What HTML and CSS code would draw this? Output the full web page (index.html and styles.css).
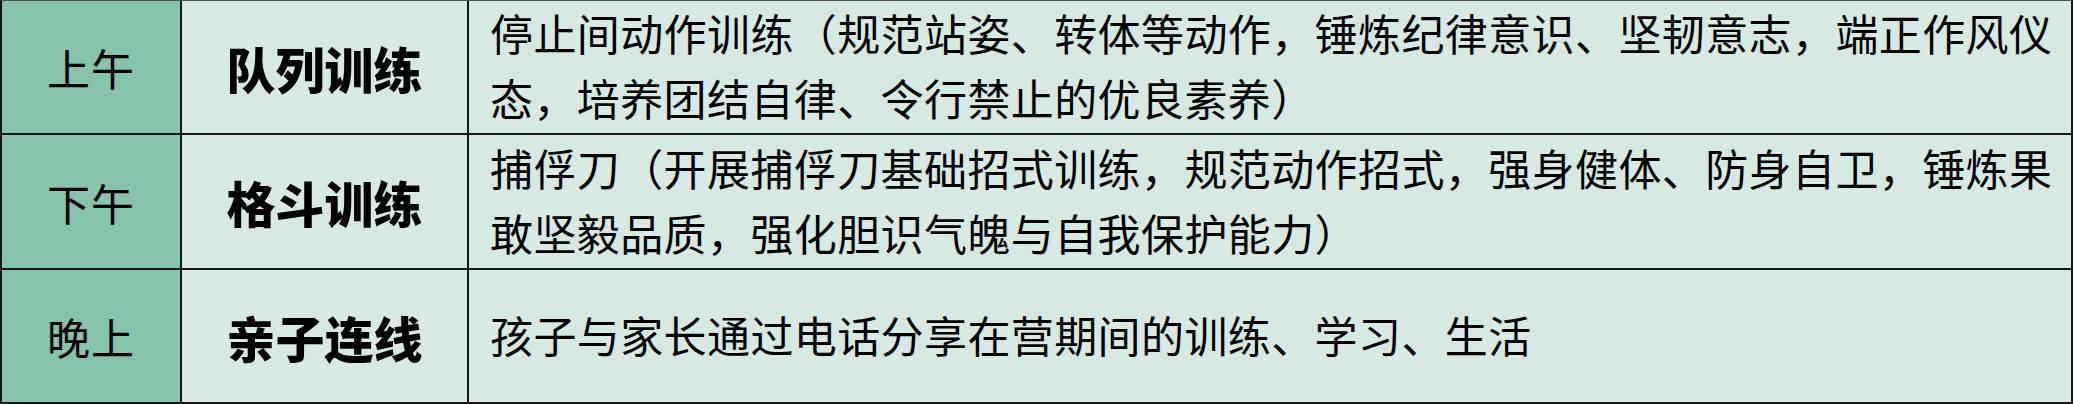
FILE: index.html
```html
<!DOCTYPE html>
<html lang="zh-CN">
<head>
<meta charset="utf-8">
<title>训练安排</title>
<link rel="stylesheet" href="styles.css">
</head>
<body>
<div class="schedule">
  <div class="cell time">上午</div>
  <div class="cell topic">队列训练</div>
  <div class="cell desc"><p>停止间动作训练（规范站姿、转体等动作，锤炼纪律意识、坚韧意志，端正作风仪态，培养团结自律、令行禁止的优良素养）</p></div>

  <div class="cell time">下午</div>
  <div class="cell topic">格斗训练</div>
  <div class="cell desc"><p>捕俘刀（开展捕俘刀基础招式训练，规范动作招式，强身健体、防身自卫，锤炼果敢坚毅品质，强化胆识气魄与自我保护能力）</p></div>

  <div class="cell time">晚上</div>
  <div class="cell topic">亲子连线</div>
  <div class="cell desc"><p>孩子与家长通过电话分享在营期间的训练、学习、生活</p></div>
</div>
</body>
</html>
```

FILE: styles.css
```css
html, body {
  margin: 0;
  padding: 0;
}

body {
  width: 2073px;
  height: 404px;
  background: #ffffff;
  font-family: "Noto Sans CJK SC", sans-serif;
  color: #000000;
}

.schedule {
  box-sizing: border-box;
  width: 2073px;
  display: grid;
  grid-template-columns: 178px 285px 1602px;
  grid-template-rows: 132px 133px 132px;
  gap: 2px;
  background: #161616;
  border-top: 1px solid #4f5552;
  border-left: 2px solid #161616;
  border-right: 2px solid #161616;
  border-bottom: 2px solid #161616;
}

.cell {
  display: flex;
  align-items: center;
  background: #d6eae3;
  overflow: hidden;
}

.time {
  justify-content: center;
  background: #85c3ab;
  font-size: 43px;
  font-weight: 400;
  letter-spacing: 1px;
}

.topic {
  justify-content: center;
  font-size: 49px;
  font-weight: 900;
}

.desc {
  box-sizing: border-box;
  padding: 0 8px 4px 21px;
  font-size: 43px;
  font-weight: 400;
  line-height: 65px;
  letter-spacing: 0.4px;
}

.desc p {
  margin: 0;
}
```
